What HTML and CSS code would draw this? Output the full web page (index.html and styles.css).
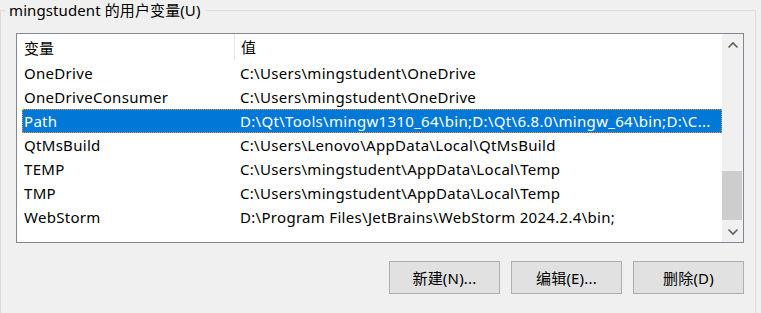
FILE: index.html
```html
<!doctype html>
<html lang="zh-CN">
    <head>
        <meta charset="utf-8">
        <title>用户变量</title>
        <link rel="stylesheet" href="styles.css">
    </head>
    <body>
        <div class="group">
            <span class="group-title">mingstudent 的用户变量(U)</span>

            <div class="listview">
                <div class="list-main">
                    <div class="list-header">
                        <span class="col-name">变量</span>
                        <span class="col-value">值</span>
                    </div>
                    <div class="row"><span class="col-name">OneDrive</span><span class="col-value">C:\Users\mingstudent\OneDrive</span></div>
                    <div class="row"><span class="col-name">OneDriveConsumer</span><span class="col-value">C:\Users\mingstudent\OneDrive</span></div>
                    <div class="row selected"><span class="col-name">Path</span><span class="col-value">D:\Qt\Tools\mingw1310_64\bin;D:\Qt\6.8.0\mingw_64\bin;D:\C...</span></div>
                    <div class="row"><span class="col-name">QtMsBuild</span><span class="col-value">C:\Users\Lenovo\AppData\Local\QtMsBuild</span></div>
                    <div class="row"><span class="col-name">TEMP</span><span class="col-value">C:\Users\mingstudent\AppData\Local\Temp</span></div>
                    <div class="row"><span class="col-name">TMP</span><span class="col-value">C:\Users\mingstudent\AppData\Local\Temp</span></div>
                    <div class="row"><span class="col-name">WebStorm</span><span class="col-value">D:\Program Files\JetBrains\WebStorm 2024.2.4\bin;</span></div>
                </div>
                <div class="scrollbar">
                    <div class="arrow">
                        <svg width="12" height="8" viewBox="0 0 12 8"><path d="M1.5 6.5 L6 2 L10.5 6.5" fill="none" stroke="#606060" stroke-width="1.6"/></svg>
                    </div>
                    <div class="track"><div class="thumb"></div></div>
                    <div class="arrow">
                        <svg width="12" height="8" viewBox="0 0 12 8"><path d="M1.5 1.5 L6 6 L10.5 1.5" fill="none" stroke="#606060" stroke-width="1.6"/></svg>
                    </div>
                </div>
            </div>

            <div class="buttons">
                <button class="btn">新建(N)...</button>
                <button class="btn">编辑(E)...</button>
                <button class="btn">删除(D)</button>
            </div>
        </div>
    </body>
</html>
```

FILE: styles.css
```css
body {
    margin: 0;
    background: #f0f0f0;
    font-family: "Noto Sans", "Noto Sans CJK SC", sans-serif;
    font-size: 15px;
    color: #000;
}

/* group box: the title sits on top of the border line */
.group {
    position: relative;
    margin: 10px 0 0 0;
    width: 756px;
    border: 1px solid #dcdcdc;
    padding: 22px 11px 19px 15px;
    box-sizing: border-box;
}
.group-title {
    position: absolute;
    top: -11px;
    left: 4px;
    padding: 0 4px;
    line-height: 20px;
    letter-spacing: 0.1px;
    background: #f0f0f0;
}

.listview {
    display: flex;
    height: 208px;
    border: 1px solid #828790;
    background: #fff;
}
.list-main {
    flex: 1;
    overflow: hidden;
}
.list-header {
    display: flex;
    height: 27px;
    align-items: center;
}
.list-header .col-value {
    border-left: 1px solid #e5e5e5;
    height: 26px;
    line-height: 26px;
    align-self: flex-start;
}
.row {
    display: flex;
    height: 24px;
    align-items: center;
    margin-left: 5px;
    letter-spacing: 0.3px;
}
.col-name {
    width: 212px;
    padding-left: 7px;
    box-sizing: border-box;
    flex: none;
    white-space: nowrap;
}
.list-header .col-name {
    width: 217px;
}
.row .col-name {
    padding-left: 2px;
}
.col-value {
    padding-left: 6px;
    white-space: nowrap;
}
.row.selected {
    background: #0078d7;
    color: #fff;
    outline: 1px dotted #e89a3c;
    outline-offset: -1px;
}

.scrollbar {
    width: 21px;
    display: flex;
    flex-direction: column;
    background: #f0f0f0;
}
.arrow {
    height: 21px;
    display: flex;
    align-items: center;
    justify-content: center;
}
.track {
    flex: 1;
    display: flex;
    flex-direction: column;
    justify-content: flex-end;
    padding: 0 1px 0 0;
}
.thumb {
    height: 49px;
    background: #cdcdcd;
    margin-bottom: 1px;
}

.buttons {
    display: flex;
    justify-content: flex-end;
    gap: 11px;
    margin-top: 18px;
}
.btn {
    width: 111px;
    height: 33px;
    border: 1px solid #adadad;
    background: #e1e1e1;
    font-family: inherit;
    font-size: 15px;
    letter-spacing: 0.2px;
    color: #000;
    padding: 0;
}
```
